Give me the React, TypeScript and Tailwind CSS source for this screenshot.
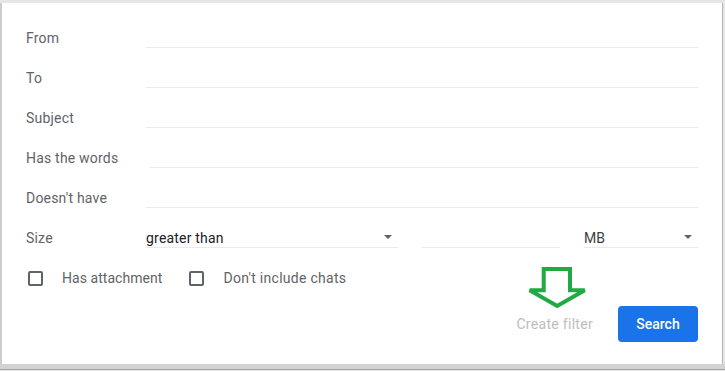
import React from "react";

const font = { fontFamily: "Roboto, 'Liberation Sans', Arial, sans-serif" };

const Caret = () => (
  <svg width="10" height="5" viewBox="0 0 10 5" className="shrink-0">
    <path d="M1 0h8L5 4z" fill="#5f6368" />
  </svg>
);

const TextRow = ({ label, indent = false }: { label: string; indent?: boolean }) => (
  <div className="flex h-5 items-center">
    <div className="w-[120px] shrink-0 text-sm tracking-[0.2px] text-[#5f6368]">{label}</div>
    <div className={`h-5 flex-1 border-b border-[#e8eaed] ${indent ? "ml-1" : ""}`} />
  </div>
);

const Checkbox = ({ label, wide = false }: { label: string; wide?: boolean }) => (
  <label className="flex items-center">
    <span className="ml-[2px] h-[15px] w-[15px] rounded-[2px] border-2 border-[#5f6368]" />
    <span className={`ml-[19px] text-sm text-[#5f6368] ${wide ? "tracking-[0.28px]" : "tracking-[0.05px]"}`}>
      {label}
    </span>
  </label>
);

export default function App() {
  return (
    <div className="relative h-[371px] w-[725px] overflow-hidden bg-[#e6e6e6]" style={font}>
      <div className="mr-[2px] mt-[3px] h-[361px] border-l-2 border-r border-l-[#cdcdcd] border-r-[#b4b4b4] bg-white pl-6 pr-6 pt-[25px]">
        <div className="flex flex-col gap-5">
          <TextRow label="From" />
          <TextRow label="To" />
          <TextRow label="Subject" />
          <TextRow label="Has the words" indent />
          <TextRow label="Doesn't have" />

          <div className="flex h-5 items-center">
            <div className="w-[120px] shrink-0 text-sm tracking-[0.2px] text-[#5f6368]">Size</div>
            <div className="flex h-5 w-[252px] items-center justify-between border-b border-[#e8eaed] pr-[5px]">
              <span className="text-sm tracking-[0.2px] text-[#202124]">greater than</span>
              <Caret />
            </div>
            <div className="ml-6 h-5 w-[138px] border-b border-[#e8eaed]" />
            <div className="ml-6 flex h-5 flex-1 items-center justify-between border-b border-[#e8eaed] pr-[5px]">
              <span className="text-sm text-[#3c4043]">MB</span>
              <Caret />
            </div>
          </div>

          <div className="flex h-5 items-center gap-[25px]">
            <Checkbox label="Has attachment" />
            <Checkbox label="Don't include chats" wide />
          </div>
        </div>

        <div className="mt-[18px] flex items-center justify-end gap-[25px]">
          <span className="text-sm tracking-[0.3px] text-[#bdbdbd]">Create filter</span>
          <button className="h-9 w-20 rounded-[4px] bg-[#1a73e8] text-sm font-medium text-white">
            Search
          </button>
        </div>
      </div>
      <div className="h-[5px] bg-[#d3d3d3]" />
      <div className="h-px bg-[#a3a3a3]" />

      <svg
        className="absolute left-[527px] top-[265px]"
        width="62"
        height="48"
        viewBox="0 0 62 48"
        fill="none"
      >
        <polygon
          points="16.7,4 43,4 43,25.3 57.7,25.3 30.2,41 2.7,25.3 16.7,25.3"
          stroke="#21a944"
          strokeWidth="4"
          strokeLinejoin="miter"
          strokeMiterlimit="3"
        />
      </svg>
    </div>
  );
}
